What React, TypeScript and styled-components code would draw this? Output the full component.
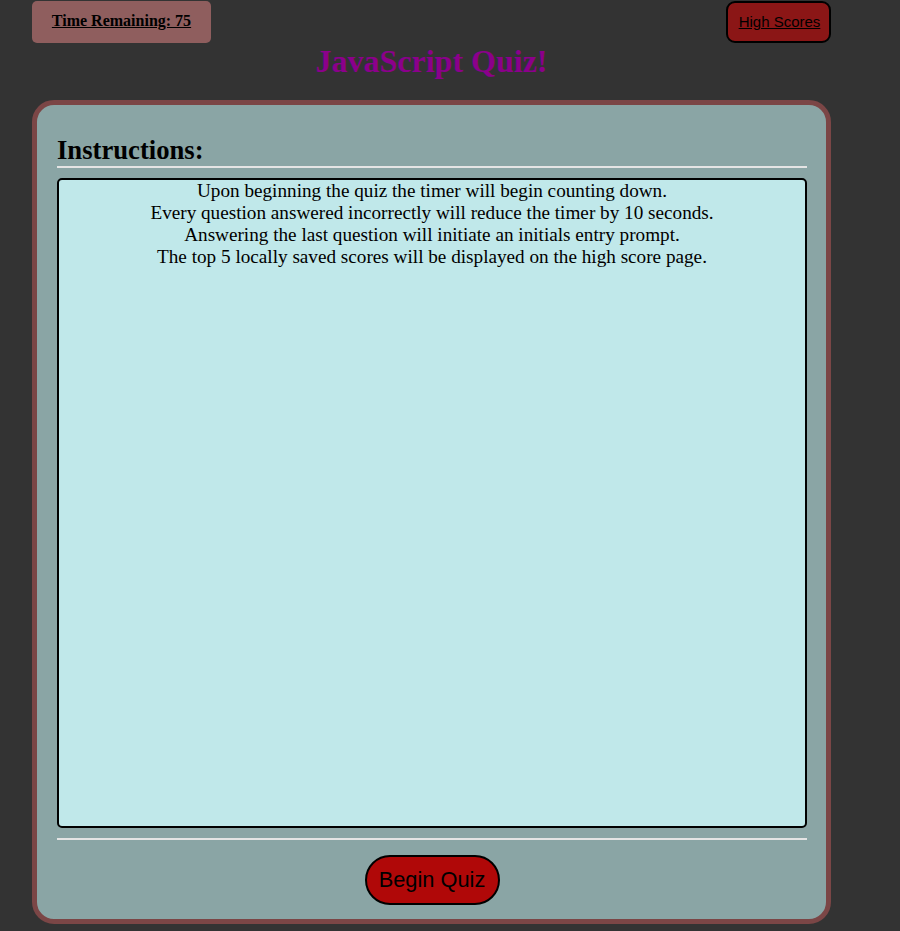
import React from "react";
import styled, { createGlobalStyle } from "styled-components";

const Global = createGlobalStyle`
  html, body { margin: 0; padding: 0; background: #333333; }
  body { font-family: "Liberation Serif", "Times New Roman", serif; }
`;

const Page = styled.div`
  width: 799px;
  margin-left: 32px;
  padding-top: 1px;
  display: flex;
  flex-direction: column;
`;

const Header = styled.header`
  display: flex;
  justify-content: space-between;
  align-items: stretch;
  height: 42px;
`;

const Timer = styled.div`
  width: 179px;
  box-sizing: border-box;
  background: #8f5e5e;
  border-radius: 5px;
  display: flex;
  align-items: center;
  justify-content: center;
  font-family: "Liberation Serif", serif;
  font-weight: bold;
  font-size: 16px;
  text-decoration: underline;
  color: #000;
  padding-bottom: 2px;
`;

const HighScores = styled.a`
  box-sizing: border-box;
  width: 105px;
  background: #8b1616;
  border: 2px solid #000;
  border-radius: 9px;
  display: flex;
  align-items: center;
  justify-content: center;
  font-family: "Liberation Sans", Arial, sans-serif;
  font-size: 15px;
  color: #000;
  text-decoration: underline;
  cursor: pointer;
  padding-bottom: 2px;
  padding-left: 2px;
`;

const Title = styled.h1`
  margin: 0;
  text-align: center;
  font-family: "Liberation Serif", serif;
  font-weight: bold;
  font-size: 32px;
  line-height: 37px;
  color: #8b008b;
`;

const Card = styled.main`
  margin-top: 20px;
  box-sizing: border-box;
  width: 799px;
  border: 5px solid #7b4646;
  border-radius: 22px;
  background: #8aa5a5;
  padding: 29px 19px 14px 20px;
  display: flex;
  flex-direction: column;
`;

const Heading = styled.h2`
  margin: 0;
  font-size: 26.67px;
  line-height: 32px;
  font-weight: bold;
  color: #000;
`;

const Rule = styled.div<{ $before: number; $after: number }>`
  height: 2px;
  background: #e4e4e4;
  margin-top: ${(p) => p.$before}px;
  margin-bottom: ${(p) => p.$after}px;
`;

const Box = styled.section`
  box-sizing: border-box;
  height: 650px;
  background: #c0e8ea;
  border: 2px solid #000;
  border-radius: 5px;
  text-align: center;
  font-size: 19.2px;
  line-height: 22px;
  color: #000;
`;

const Line = styled.div``;

const Footer = styled.div`
  display: flex;
  justify-content: center;
`;

const BeginButton = styled.button`
  box-sizing: border-box;
  width: 135px;
  height: 50px;
  background: #b00808;
  border: 2px solid #000;
  border-radius: 25px;
  font-family: "Liberation Sans", Arial, sans-serif;
  font-size: 21.8px;
  color: #000;
  padding: 0;
  cursor: pointer;
`;

const lines = [
  "Upon beginning the quiz the timer will begin counting down.",
  "Every question answered incorrectly will reduce the timer by 10 seconds.",
  "Answering the last question will initiate an initials entry prompt.",
  "The top 5 locally saved scores will be displayed on the high score page.",
];

export default function App() {
  return (
    <>
      <Global />
      <Page>
        <Header>
          <Timer>Time Remaining: 75</Timer>
          <HighScores>High Scores</HighScores>
        </Header>
        <Title>JavaScript Quiz!</Title>
        <Card>
          <Heading>Instructions:</Heading>
          <Rule $before={0} $after={10} />
          <Box>
            {lines.map((l) => (
              <Line key={l}>{l}</Line>
            ))}
          </Box>
          <Rule $before={10} $after={15} />
          <Footer>
            <BeginButton>Begin Quiz</BeginButton>
          </Footer>
        </Card>
      </Page>
    </>
  );
}
